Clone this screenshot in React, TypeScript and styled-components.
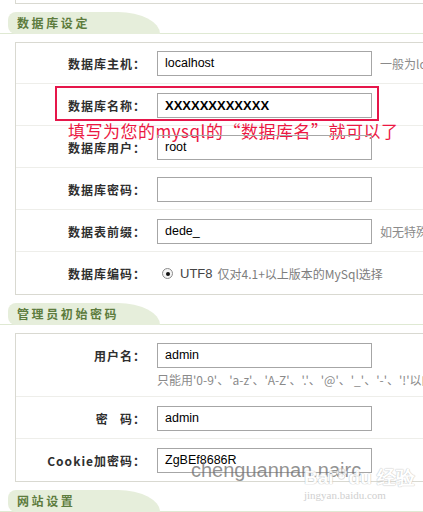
import styled, { createGlobalStyle } from "styled-components";

const GlobalStyle = createGlobalStyle`
    html, body {
        margin: 0;
        padding: 0;
        background: #fff;
        overflow: hidden;
    }
    body {
        font-family: "Noto Sans CJK SC", "Liberation Sans", sans-serif;
        font-size: 12px;
        color: #333;
    }
`;

type RowData = {
    label: string;
    value?: string;
    bold?: boolean;
    hint?: string;
};

const dbRows: RowData[] = [
    { label: "数据库主机：", value: "localhost", hint: "一般为localhost" },
    { label: "数据库名称：", value: "XXXXXXXXXXXX", bold: true },
    { label: "数据库用户：", value: "root" },
    { label: "数据库密码：", value: "" },
    { label: "数据表前缀：", value: "dede_", hint: "如无特殊需要,请不要修改" },
];

export default function App() {
    return (
        <Page>
            <GlobalStyle />
            <PanelEnd />

            <HeaderBar>
                <Tab>数据库设定</Tab>
            </HeaderBar>
            <Panel>
                {dbRows.map((row, i) => (
                    <Row key={row.label} $first={i === 0}>
                        <Label>{row.label}</Label>
                        <Input $bold={row.bold}>{row.value}</Input>
                        {row.hint && <SideHint>{row.hint}</SideHint>}
                        {i === 1 && (
                            <>
                                <RedBox />
                                <Annotation>填写为您的mysql的“数据库名”就可以了</Annotation>
                            </>
                        )}
                    </Row>
                ))}
                <Row $last>
                    <Label>数据库编码：</Label>
                    <RadioWrap>
                        <Radio />
                        <RadioText>UTF8</RadioText>
                        <InlineHint>仅对4.1+以上版本的MySql选择</InlineHint>
                    </RadioWrap>
                </Row>
            </Panel>

            <HeaderBar>
                <Tab>管理员初始密码</Tab>
            </HeaderBar>
            <Panel>
                <Row $top>
                    <Label>用户名：</Label>
                    <FieldCol>
                        <Input>admin</Input>
                        <BelowHint>只能用'0-9'、'a-z'、'A-Z'、'.'、'@'、'_'、'-'、'!'以内范围的字符</BelowHint>
                    </FieldCol>
                </Row>
                <Row>
                    <Label>密&nbsp;&nbsp;&nbsp;码：</Label>
                    <Input>admin</Input>
                </Row>
                <Row $last>
                    <Label>Cookie加密码：</Label>
                    <Input>ZgBEf8686R</Input>
                </Row>
            </Panel>

            <HeaderBar>
                <Tab>网站设置</Tab>
            </HeaderBar>

            <Watermark>chenguannan.nairc</Watermark>
            <BaiduMark>
                <BaiduLogo>
                    Bai
                    <Paw viewBox="0 0 20 20">
                        <ellipse cx="10" cy="13" rx="5" ry="4.5" />
                        <ellipse cx="4" cy="7" rx="2" ry="2.6" />
                        <ellipse cx="8" cy="3.5" rx="2" ry="2.6" />
                        <ellipse cx="12.5" cy="3.5" rx="2" ry="2.6" />
                        <ellipse cx="16.5" cy="7" rx="2" ry="2.6" />
                    </Paw>
                    du 经验
                </BaiduLogo>
                <BaiduUrl>jingyan.baidu.com</BaiduUrl>
            </BaiduMark>
        </Page>
    );
}

const Page = styled.div`
    position: relative;
    width: 760px;
    height: 512px;
`;

const PanelEnd = styled.div`
    margin-left: 15px;
    height: 3px;
    border-left: 1px solid #d9d9d1;
    border-bottom: 1px solid #d9d9d1;
`;

const HeaderBar = styled.div`
    margin: 8px 0 8px;
    height: 21px;
    padding-left: 8px;
    display: flex;
    border-bottom: 1px solid #dfe9d3;
`;

const Tab = styled.div`
    width: 152px;
    height: 22px;
    box-sizing: border-box;
    padding-left: 9px;
    background: #e6eedb;
    border-radius: 8px 42px 0 8px / 8px 22px 0 8px;
    color: #5d7c3e;
    font-weight: bold;
    font-size: 12px;
    letter-spacing: 2.6px;
    line-height: 22px;
`;

const Panel = styled.div`
    margin-left: 15px;
    border: 1px solid #d9d9d1;
`;

const Row = styled.div<{ $first?: boolean; $last?: boolean; $top?: boolean }>`
    position: relative;
    display: flex;
    align-items: ${({ $top }) => ($top ? "flex-start" : "center")};
    padding: ${({ $first }) => ($first ? "8px" : "9px")} 0 ${({ $last }) => ($last ? "8px" : "7px")};
    border-bottom: ${({ $last }) => ($last ? "none" : "1px solid #eeeeea")};
    white-space: nowrap;
`;

const Label = styled.div`
    width: 130px;
    flex: none;
    text-align: right;
    font-weight: bold;
    font-size: 12px;
    letter-spacing: 1px;
    color: #2f2f2f;
    line-height: 25px;
`;

const FieldCol = styled.div`
    display: flex;
    flex-direction: column;
`;

const Input = styled.div<{ $bold?: boolean }>`
    margin-left: 11px;
    width: 215px;
    height: 25px;
    box-sizing: border-box;
    border: 1px solid #a6a6a6;
    padding-left: 7px;
    font-family: "Liberation Sans", Arial, sans-serif;
    font-size: ${({ $bold }) => ($bold ? "13px" : "12.5px")};
    font-weight: ${({ $bold }) => ($bold ? "bold" : "normal")};
    color: #000;
    line-height: 23px;
    flex: none;
`;

const SideHint = styled.span`
    margin-left: 8px;
    color: #8a8a8a;
    font-size: 12px;
`;

const BelowHint = styled.div`
    margin: 2px 0 0 11px;
    color: #8a8a8a;
    font-size: 12px;
    line-height: 19px;
`;

const RadioWrap = styled.div`
    display: flex;
    align-items: center;
    margin-left: 16px;
    line-height: 25px;
`;

const Radio = styled.span`
    position: relative;
    width: 11px;
    height: 11px;
    box-sizing: border-box;
    border-radius: 50%;
    border: 1px solid #8c8c8c;
    background: #f4f4f4;

    &::after {
        content: "";
        position: absolute;
        left: 2.5px;
        top: 2.5px;
        width: 4px;
        height: 4px;
        border-radius: 50%;
        background: #111;
    }
`;

const RadioText = styled.span`
    margin-left: 7px;
    font-family: "Liberation Sans", Arial, sans-serif;
    font-size: 13px;
    color: #444;
`;

const InlineHint = styled.span`
    margin-left: 5px;
    color: #7d7d7d;
    font-size: 12px;
`;

const RedBox = styled.div`
    position: absolute;
    left: 39px;
    top: 2px;
    width: 324px;
    height: 35px;
    box-sizing: border-box;
    border: 2px solid #e6164a;
`;

const Annotation = styled.div`
    position: absolute;
    left: 52px;
    top: 37px;
    font-size: 17px;
    line-height: 20px;
    color: #ec1843;
    letter-spacing: 0.5px;
`;

const Watermark = styled.div`
    position: absolute;
    left: 191px;
    top: 459px;
    font-family: "Liberation Sans", Arial, sans-serif;
    font-size: 20px;
    color: rgba(110, 110, 110, 0.75);
`;

const BaiduMark = styled.div`
    position: absolute;
    left: 304px;
    top: 467px;
    display: flex;
    flex-direction: column;
    align-items: flex-start;
`;

const BaiduLogo = styled.div`
    display: flex;
    align-items: center;
    font-family: "Liberation Sans", Arial, sans-serif;
    font-weight: bold;
    font-size: 19px;
    line-height: 22px;
    color: #fff;
    text-shadow: 0 0 1px #b8b8b8, 0 0 1px #b8b8b8;
    opacity: 0.85;
`;

const Paw = styled.svg`
    width: 13px;
    height: 13px;
    margin: -8px 1px 0;
    fill: #fff;
    stroke: #c4c4c4;
    stroke-width: 1;
`;

const BaiduUrl = styled.div`
    font-family: "Liberation Serif", serif;
    font-size: 11px;
    color: #d0d0d0;
    line-height: 12px;
`;
